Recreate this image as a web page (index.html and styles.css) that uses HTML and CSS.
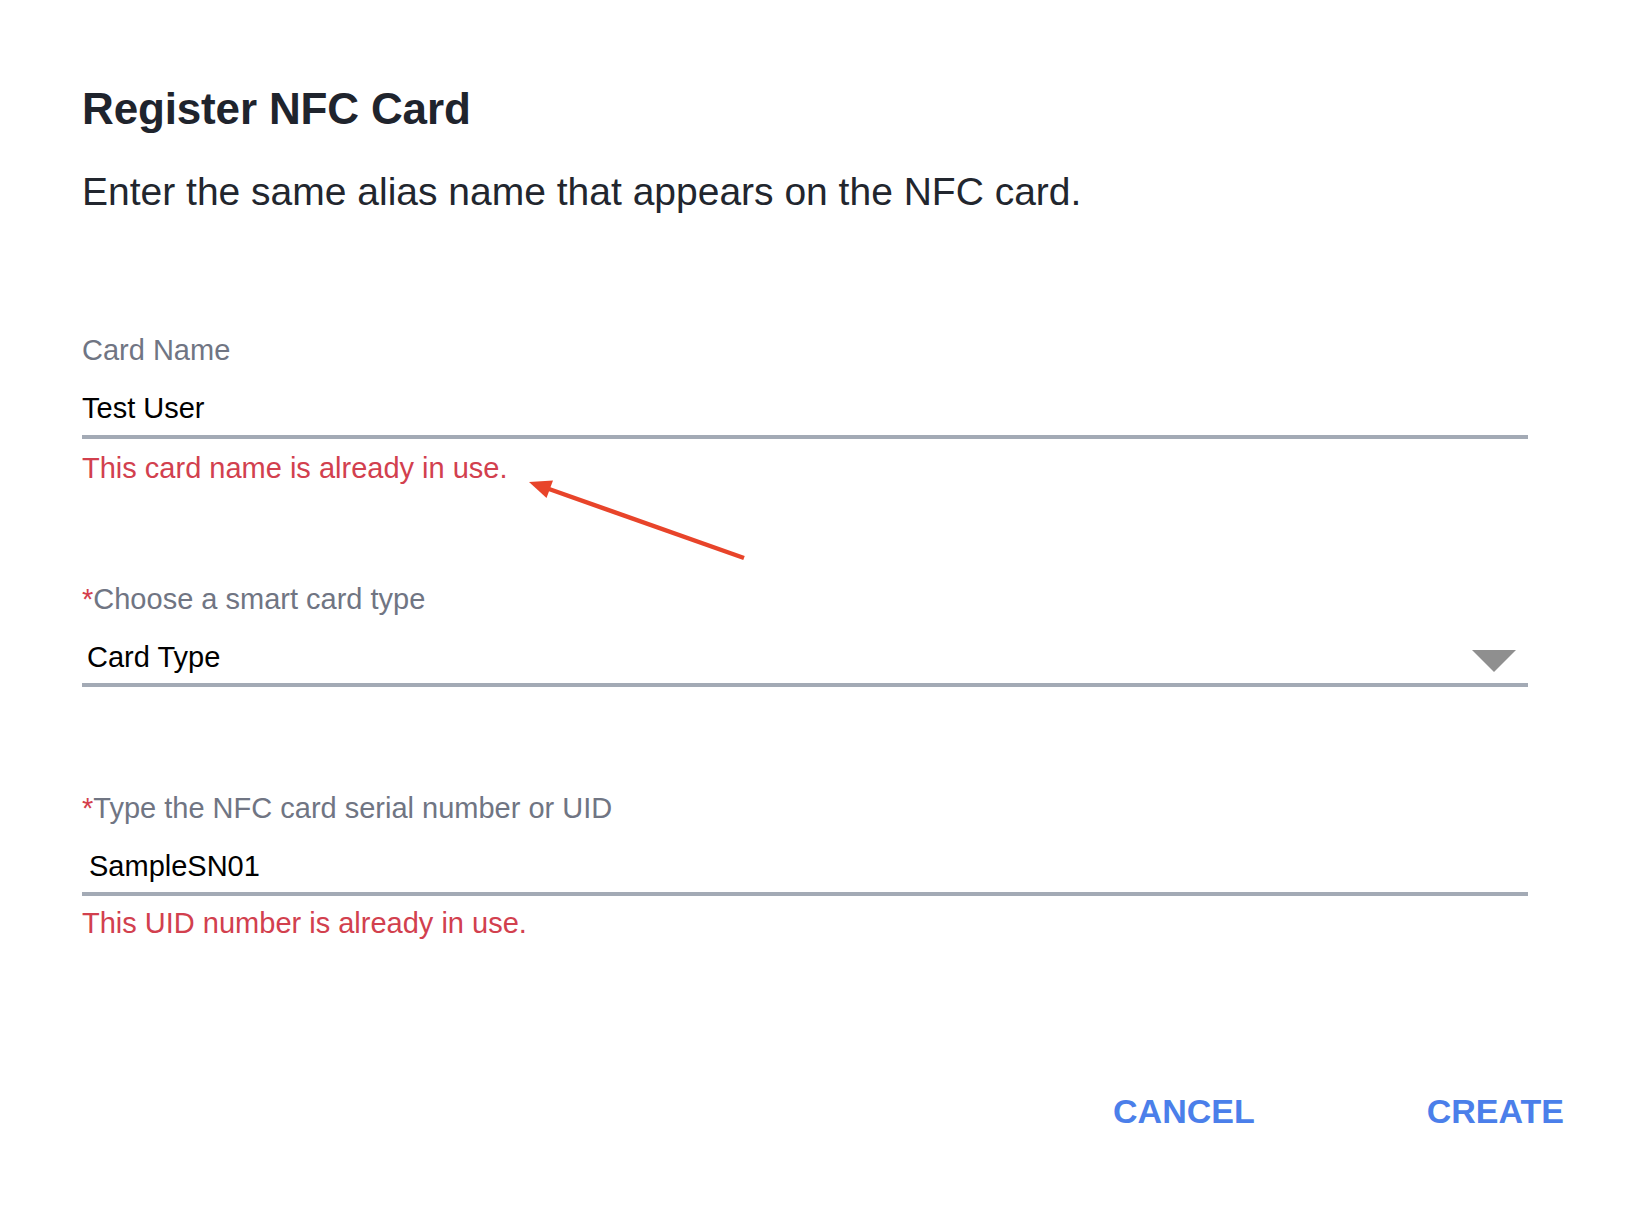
FILE: index.html
```html
<!DOCTYPE html>
<html lang="en">
<head>
<meta charset="utf-8">
<title>Register NFC Card</title>
<link rel="stylesheet" href="styles.css">
</head>
<body>
<div class="dialog">
  <h1 class="title">Register NFC Card</h1>
  <p class="subtitle">Enter the same alias name that appears on the NFC card.</p>

  <div class="field field-first">
    <div class="label">Card Name</div>
    <div class="input">Test User</div>
    <div class="error">This card name is already in use.</div>
  </div>

  <div class="field field-select">
    <div class="label"><span class="req">*</span>Choose a smart card type</div>
    <div class="input select">
      <span class="select-text">Card Type</span>
      <span class="caret"></span>
    </div>
  </div>

  <div class="field field-uid">
    <div class="label"><span class="req">*</span>Type the NFC card serial number or UID</div>
    <div class="input uid">SampleSN01</div>
    <div class="error">This UID number is already in use.</div>
  </div>

  <div class="actions">
    <span class="btn">CANCEL</span>
    <span class="btn">CREATE</span>
  </div>

  <svg class="annotation" width="1650" height="1220" viewBox="0 0 1650 1220">
    <line x1="549" y1="489" x2="744" y2="558" stroke="#e8442a" stroke-width="4.5" stroke-linecap="butt"/>
    <polygon points="529,482 546.5,498 553,480.5" fill="#e8442a"/>
  </svg>
</div>
</body>
</html>
```
FILE: styles.css
```css
html, body {
  margin: 0;
  padding: 0;
  background: #ffffff;
}

body {
  font-family: "Liberation Sans", Arial, Helvetica, sans-serif;
  width: 1650px;
  height: 1220px;
  overflow: hidden;
}

.dialog {
  position: relative;
  padding: 83px 0 0 82px;
  box-sizing: border-box;
  width: 1650px;
  height: 1220px;
}

.title {
  margin: 0;
  font-size: 44px;
  line-height: 52px;
  font-weight: 700;
  color: #1f242d;
  letter-spacing: -0.15px;
}

.subtitle {
  margin: 34px 0 0 0;
  font-size: 39px;
  line-height: 46px;
  color: #22262e;
}

.field {
  width: 1446px;
}

.field-first {
  margin-top: 118px;
}

.field-select {
  margin-top: 97px;
}

.field-uid {
  margin-top: 104px;
}

.label {
  font-size: 29px;
  line-height: 34px;
  color: #707583;
}

.req {
  color: #d43f4d;
}

.input {
  margin-top: 24px;
  font-size: 29px;
  line-height: 34px;
  color: #000000;
  padding-bottom: 10px;
  border-bottom: 4px solid #a3aab5;
}

.select {
  display: flex;
  align-items: center;
  justify-content: space-between;
  padding-left: 5px;
  padding-right: 12px;
  padding-bottom: 9px;
}

.uid {
  padding-left: 7px;
  padding-bottom: 9px;
}

.caret {
  width: 0;
  height: 0;
  border-left: 22px solid transparent;
  border-right: 22px solid transparent;
  border-top: 22px solid #8f8f8f;
  margin-top: 8px;
}

.error {
  margin-top: 12px;
  font-size: 29px;
  line-height: 34px;
  color: #d2404e;
}

.field-uid .error {
  margin-top: 10px;
}

.actions {
  display: flex;
  justify-content: flex-end;
  gap: 172px;
  width: 1482px;
  margin-top: 151px;
}

.btn {
  font-size: 34px;
  line-height: 40px;
  font-weight: 700;
  color: #4b7fea;
}

.annotation {
  position: absolute;
  left: 0;
  top: 0;
  pointer-events: none;
}
```
